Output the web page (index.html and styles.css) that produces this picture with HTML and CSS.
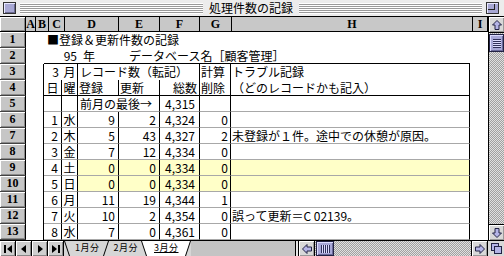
FILE: index.html
```html
<!DOCTYPE html>
<html lang="ja">
<head>
<meta charset="utf-8">
<title>処理件数の記録</title>
<link rel="stylesheet" href="styles.css">
</head>
<body>
<div class="window">
  <div class="titlebar">
    <div class="closebox"></div>
    <div class="stripes"></div>
    <div class="title">処理件数の記録</div>
    <div class="stripes"></div>
    <div class="zoombox"><div class="zoominner"></div></div>
  </div>
  <div class="main">
    <div class="sheet">
      <div class="colheads">
        <div class="corner"></div>
        <div class="ch">A</div><div class="ch">B</div><div class="ch">C</div><div class="ch">D</div>
        <div class="ch">E</div><div class="ch">F</div><div class="ch">G</div><div class="ch">H</div><div class="ch">I</div>
      </div>

      <div class="row">
        <div class="rh">1</div><div class="c"></div>
        <div class="c span-bh title1">■登録＆更新件数の記録</div>
        <div class="c"></div>
      </div>

      <div class="row">
        <div class="rh">2</div><div class="c"></div>
        <div class="c span-bh topline"><span class="yr">95</span><span class="nen">年</span><span class="db">データベース名［顧客管理］</span></div>
        <div class="c"></div>
      </div>

      <div class="row hrow">
        <div class="rh">3</div><div class="c ca"></div>
        <div class="c cb nb r">3</div><div class="c cc">月</div>
        <div class="c span-df">レコード数（転記）</div>
        <div class="c cg">計算</div>
        <div class="c ch2">トラブル記録</div>
        <div class="c"></div>
      </div>

      <div class="row hrow sub">
        <div class="rh">4</div><div class="c ca"></div>
        <div class="c cb ctr">日</div><div class="c cc">曜</div>
        <div class="c cd">登録</div><div class="c ce">更新</div><div class="c cf r">総数</div>
        <div class="c cg">削除</div>
        <div class="c ch2">（どのレコードかも記入）</div>
        <div class="c"></div>
      </div>

      <div class="row drow">
        <div class="rh">5</div><div class="c ca"></div>
        <div class="c cb"></div><div class="c cc"></div>
        <div class="c span-de">前月の最後→</div><div class="c cf r">4,315</div>
        <div class="c cg"></div><div class="c ch2"></div>
        <div class="c"></div>
      </div>

      <div class="row drow">
        <div class="rh">6</div><div class="c ca"></div>
        <div class="c cb r">1</div><div class="c cc">水</div>
        <div class="c cd r">9</div><div class="c ce r">2</div><div class="c cf r">4,324</div>
        <div class="c cg r">0</div><div class="c ch2"></div>
        <div class="c"></div>
      </div>

      <div class="row drow">
        <div class="rh">7</div><div class="c ca"></div>
        <div class="c cb r">2</div><div class="c cc">木</div>
        <div class="c cd r">5</div><div class="c ce r">43</div><div class="c cf r">4,327</div>
        <div class="c cg r">2</div><div class="c ch2">未登録が１件。途中での休憩が原因。</div>
        <div class="c"></div>
      </div>

      <div class="row drow">
        <div class="rh">8</div><div class="c ca"></div>
        <div class="c cb r">3</div><div class="c cc">金</div>
        <div class="c cd r">7</div><div class="c ce r">12</div><div class="c cf r">4,334</div>
        <div class="c cg r">0</div><div class="c ch2"></div>
        <div class="c"></div>
      </div>

      <div class="row drow hl">
        <div class="rh">9</div><div class="c ca"></div>
        <div class="c cb r">4</div><div class="c cc">土</div>
        <div class="c cd r">0</div><div class="c ce r">0</div><div class="c cf r">4,334</div>
        <div class="c cg r">0</div><div class="c ch2"></div>
        <div class="c"></div>
      </div>

      <div class="row drow hl">
        <div class="rh">10</div><div class="c ca"></div>
        <div class="c cb r">5</div><div class="c cc">日</div>
        <div class="c cd r">0</div><div class="c ce r">0</div><div class="c cf r">4,334</div>
        <div class="c cg r">0</div><div class="c ch2"></div>
        <div class="c"></div>
      </div>

      <div class="row drow">
        <div class="rh">11</div><div class="c ca"></div>
        <div class="c cb r">6</div><div class="c cc">月</div>
        <div class="c cd r">11</div><div class="c ce r">19</div><div class="c cf r">4,344</div>
        <div class="c cg r">1</div><div class="c ch2"></div>
        <div class="c"></div>
      </div>

      <div class="row drow">
        <div class="rh">12</div><div class="c ca"></div>
        <div class="c cb r">7</div><div class="c cc">火</div>
        <div class="c cd r">10</div><div class="c ce r">2</div><div class="c cf r">4,354</div>
        <div class="c cg r">0</div><div class="c ch2">誤って更新＝C 02139。</div>
        <div class="c"></div>
      </div>

      <div class="row drow">
        <div class="rh">13</div><div class="c ca"></div>
        <div class="c cb r">8</div><div class="c cc">水</div>
        <div class="c cd r">7</div><div class="c ce r">0</div><div class="c cf r">4,361</div>
        <div class="c cg r">0</div><div class="c ch2"></div>
        <div class="c"></div>
      </div>
    </div>

    <div class="vscroll">
      <div class="sbtn">
        <svg width="12" height="12" viewBox="0 0 12 12"><path d="M6 1.5 L10.5 6 L8 6 L8 10.5 L4 10.5 L4 6 L1.5 6 Z" fill="#b4b4e6" stroke="#222244" stroke-width="1"/></svg>
      </div>
      <div class="vthumb"><div class="grip-h"></div></div>
      <div class="track"></div>
      <div class="sbtn">
        <svg width="12" height="12" viewBox="0 0 12 12"><path d="M6 10.5 L10.5 6 L8 6 L8 1.5 L4 1.5 L4 6 L1.5 6 Z" fill="#b4b4e6" stroke="#222244" stroke-width="1"/></svg>
      </div>
    </div>
  </div>

  <div class="bottom">
    <div class="nav">
      <div class="nbtn"><svg width="10" height="10" viewBox="0 0 10 10"><rect x="1" y="1" width="2" height="8" fill="#000"/><path d="M9 1 L9 9 L4 5 Z" fill="#000"/></svg></div>
      <div class="nbtn"><svg width="10" height="10" viewBox="0 0 10 10"><path d="M7 1 L7 9 L2 5 Z" fill="#000"/></svg></div>
      <div class="nbtn"><svg width="10" height="10" viewBox="0 0 10 10"><path d="M3 1 L3 9 L8 5 Z" fill="#000"/></svg></div>
      <div class="nbtn"><svg width="10" height="10" viewBox="0 0 10 10"><path d="M1 1 L1 9 L6 5 Z" fill="#000"/><rect x="7" y="1" width="2" height="8" fill="#000"/></svg></div>
    </div>
    <div class="tabs">
      <svg class="slant" width="6" height="15" viewBox="0 0 6 15"><line x1="0.5" y1="0" x2="5.5" y2="15" stroke="#000"/></svg>
      <div class="tab">1月分</div>
      <svg class="slant" width="6" height="15" viewBox="0 0 6 15"><line x1="0.5" y1="15" x2="5.5" y2="0" stroke="#000"/></svg>
      <div class="tab">2月分</div>
      <svg class="slant on" width="6" height="15" viewBox="0 0 6 15"><path d="M0 0 L6 0 L6 15 Z" fill="#fff"/><line x1="0.5" y1="0" x2="5.5" y2="15" stroke="#000"/></svg>
      <div class="tab active">3月分</div>
      <svg class="slant on" width="6" height="15" viewBox="0 0 6 15"><path d="M0 0 L6 0 L0 15 Z" fill="#fff"/><line x1="0.5" y1="15" x2="5.5" y2="0" stroke="#000"/></svg>
    </div>
    <div class="filler"></div>
    <div class="split"></div>
    <div class="hscroll">
      <div class="hbtn">
        <svg width="12" height="12" viewBox="0 0 12 12"><path d="M1.5 6 L6 1.5 L6 4 L10.5 4 L10.5 8 L6 8 L6 10.5 Z" fill="#b4b4e6" stroke="#222244" stroke-width="1"/></svg>
      </div>
      <div class="hthumb"><div class="grip-v"></div></div>
      <div class="htrack"></div>
      <div class="hbtn">
        <svg width="12" height="12" viewBox="0 0 12 12"><path d="M10.5 6 L6 1.5 L6 4 L1.5 4 L1.5 8 L6 8 L6 10.5 Z" fill="#b4b4e6" stroke="#222244" stroke-width="1"/></svg>
      </div>
    </div>
    <div class="grow">
      <svg width="13" height="13" viewBox="0 0 13 13"><rect x="1.5" y="1.5" width="7" height="7" fill="#b4b4e6" stroke="#222244"/><rect x="4.5" y="4.5" width="7" height="7" fill="#b4b4e6" stroke="#222244"/></svg>
    </div>
  </div>
</div>
</body>
</html>
```

FILE: styles.css
```css
* { box-sizing: border-box; margin: 0; padding: 0; }
html, body { width: 504px; height: 256px; overflow: hidden; background: #fff; }
body { font-family: "Noto Sans CJK JP", "Noto Sans", sans-serif; font-size: 12px; color: #000; }

.window { width: 504px; height: 256px; display: flex; flex-direction: column; }

/* title bar */
.titlebar {
  height: 17px; flex: none; display: flex; align-items: center; gap: 4px;
  padding: 0 5px 0 3px; background: #ececec; border-bottom: 1px solid #000;
}
.stripes { flex: 1; height: 11px; background: repeating-linear-gradient(to bottom, #fff 0 1px, #9a9a9a 1px 2px); }
.title { line-height: 16px; font-size: 12px; padding: 0 2px; }
.closebox { width: 13px; height: 12px; border: 1px solid #333; background: #a8a8d4; box-shadow: inset 1px 1px #e8e8ff, inset -1px -1px #6a6a90; }
.zoombox { width: 13px; height: 12px; border: 1px solid #333; background: #a8a8d4; box-shadow: inset 1px 1px #e8e8ff; }
.zoominner { width: 7px; height: 6px; border-right: 1px solid #222; border-bottom: 1px solid #222; margin: 1px 0 0 1px; }

/* main area */
.main { flex: none; height: 223px; display: flex; }
.sheet { width: 488px; flex: none; display: flex; flex-direction: column; }

.colheads {
  height: 15px; display: grid; flex: none;
  grid-template-columns: 26px 10px 13px 16px 54px 41px 40px 32px 241px 15px;
  background: #c8c8c8; border-bottom: 1px solid #000;
}
.corner { border-right: 1px solid #000; box-shadow: inset 1px 1px #fff, inset -1px -1px #888; }
.ch {
  border-right: 1px solid #000; text-align: center;
  font-family: "Liberation Serif", "DejaVu Serif", serif; font-weight: bold; font-size: 12px; line-height: 14px;
}

.row {
  height: 16px; flex: none; display: grid;
  grid-template-columns: 26px 18px 18px 16px 41px 41px 40px 31px 239px 18px;
}
.rh {
  background: #c6c6c6; border-right: 1px solid #000; border-bottom: 1px solid #444;
  box-shadow: inset 1px 1px #fff, inset -1px -1px #8a8a8a;
  text-align: center; font-family: "Liberation Serif", "DejaVu Serif", serif; font-weight: bold; font-size: 12px; line-height: 15px;
}
.c { line-height: 15px; white-space: nowrap; overflow: hidden; }
.r { text-align: right; padding-right: 3px; }
.ctr { text-align: center; }

.span-bh { grid-column: 3 / 10; }
.title1 { padding-left: 3px; }
.topline { border-bottom: 1px solid #000; }
.yr { display: inline-block; width: 33px; text-align: right; }
.nen { display: inline-block; margin-left: 6px; }
.db { display: inline-block; margin-left: 34px; }

.ca { border-right: 1px solid #000; }
.cb, .cc, .cd, .ce, .cf, .cg, .ch2, .span-df, .span-de { border-right: 1px solid #000; }
.cb.nb { border-right: none; }
.cc { text-align: center; }
.span-df { grid-column: 5 / 8; padding-left: 2px; }
.span-de { grid-column: 5 / 7; padding-left: 2px; }
.hrow .cd, .hrow .ce, .hrow .cg, .hrow .ch2 { padding-left: 1px; }
.hrow .cf { padding-right: 2px; }
.sub > .c:not(:last-child):not(.ca) { border-bottom: 1px solid #000; }

.drow > .c:not(:last-child):not(.ca) { border-bottom: 1px solid #a8a8a8; }
.drow .cf.r { padding-right: 4px; }
.drow .cg.r { padding-right: 2px; }
.drow .ch2 { padding-left: 1px; }
.hl .cd, .hl .ce, .hl .cf, .hl .cg, .hl .ch2 { background: #ffffc8; }

/* vertical scrollbar */
.vscroll {
  width: 16px; flex: none; display: flex; flex-direction: column;
  border-left: 1px solid #000;
  background: #dcdcdc repeating-conic-gradient(#a0a0a0 0 25%, #e0e0e0 0 50%) 0 0 / 2px 2px;
}
.sbtn {
  height: 16px; flex: none; display: flex; align-items: center; justify-content: center;
  background: #d8d8d8; border-bottom: 1px solid #000; box-shadow: inset 1px 1px #fff, inset -1px -1px #999;
}
.sbtn:last-child { border-bottom: none; border-top: 1px solid #000; }
.vthumb {
  height: 18px; flex: none; margin: 1px 0; background: #a8a8d8; border: 1px solid #222244;
  box-shadow: inset 1px 1px #dcdcff, inset -1px -1px #6a6a9a; display: flex; align-items: center; justify-content: center;
}
.grip-h { width: 8px; height: 9px; background: repeating-linear-gradient(to bottom, #30305a 0 1px, #dcdcff 1px 2px); }
.track { flex: 1; }

/* bottom bar */
.bottom {
  flex: none; height: 16px; display: flex; border-top: 1px solid #000; background: #c4c4c4;
}
.nav { display: flex; flex: none; }
.nbtn {
  width: 16px; height: 15px; display: flex; align-items: center; justify-content: center;
  background: #cfcfcf; border-right: 1px solid #000; box-shadow: inset 1px 1px #fff, inset -1px -1px #888;
}
.tabs { display: flex; align-items: stretch; flex: none; background: #d6d6d6; }
.slant { flex: none; display: block; }
.tab { font-size: 9px; line-height: 14px; letter-spacing: 0.5px; padding: 0 3px 0 5px; }
.tab.active { background: #fff; text-decoration: underline; padding: 0 6px 0 7px; }
.filler { flex: 1; }
.split { width: 4px; flex: none; border-left: 1px solid #000; border-right: 1px solid #000; background: #e8e8e8; }
.hscroll {
  width: 188px; flex: none; display: flex;
  background: #dcdcdc repeating-conic-gradient(#a0a0a0 0 25%, #e0e0e0 0 50%) 0 0 / 2px 2px;
}
.hbtn {
  width: 16px; flex: none; display: flex; align-items: center; justify-content: center;
  background: #d8d8d8; border-right: 1px solid #000; box-shadow: inset 1px 1px #fff, inset -1px -1px #999;
}
.hbtn:last-child { border-right: none; border-left: 1px solid #000; }
.hthumb {
  width: 18px; flex: none; margin: 0 1px; background: #a8a8d8; border: 1px solid #222244;
  box-shadow: inset 1px 1px #dcdcff, inset -1px -1px #6a6a9a; display: flex; align-items: center; justify-content: center;
}
.grip-v { width: 9px; height: 8px; background: repeating-linear-gradient(to right, #30305a 0 1px, #dcdcff 1px 2px); }
.htrack { flex: 1; }
.grow {
  width: 17px; flex: none; display: flex; align-items: center; justify-content: center;
  border-left: 1px solid #000; background: #d8d8d8;
}
```
